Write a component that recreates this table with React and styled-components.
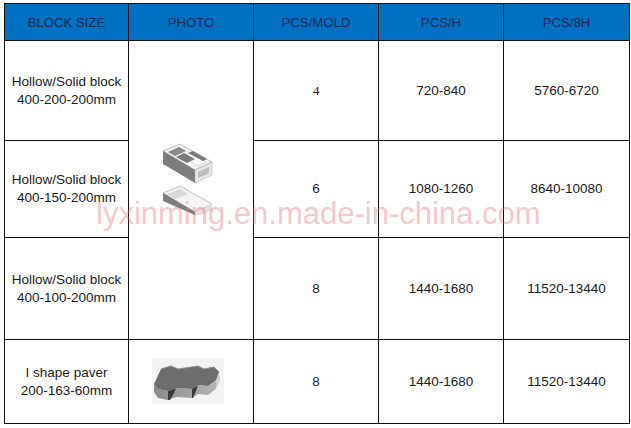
import React from 'react';
import styled, { createGlobalStyle } from 'styled-components';

const GlobalStyle = createGlobalStyle`
  html, body {
    margin: 0;
    padding: 0;
    background: #ffffff;
  }
`;

const Page = styled.div`
  position: relative;
  width: 631px;
  height: 428px;
  padding: 3px 0 0 4px;
  box-sizing: border-box;
  font-family: "Liberation Sans", Arial, sans-serif;
`;

const Table = styled.table`
  border-collapse: collapse;
  table-layout: fixed;
  width: 625px;
`;

const HeadCell = styled.th`
  background: #0070c0;
  color: #1b2d5c;
  font-weight: normal;
  font-size: 13.2px;
  border: 1px solid #111;
  height: 36px;
  padding: 0;
  text-align: center;
  vertical-align: middle;
`;

const Cell = styled.td`
  border: 1px solid #111;
  height: ${(p) => p.$h}px;
  padding: 0;
  text-align: center;
  vertical-align: middle;
  font-size: 13.5px;
  line-height: 18px;
  color: #1a1a1a;
  font-family: ${(p) => (p.$serif ? '"Liberation Serif", "DejaVu Serif", serif' : 'inherit')};
`;

const PhotoCell = styled.td`
  border: 1px solid #111;
  padding: 0;
  vertical-align: middle;
  text-align: center;
`;

const PhotoWrap = styled.div`
  display: flex;
  justify-content: center;
  align-items: center;
  padding-right: ${(p) => p.$pr || 0}px;
  padding-bottom: ${(p) => p.$pb || 0}px;
`;

const Watermark = styled.div`
  position: absolute;
  left: 96px;
  top: 196px;
  font-family: "Liberation Sans", Arial, sans-serif;
  font-size: 31px;
  color: rgba(232, 110, 120, 0.4);
  pointer-events: none;
  white-space: nowrap;
`;

const HollowBlocks = () => (
  <svg width="52" height="72" viewBox="0 0 52 72">
    {/* upper hollow block */}
    <polygon points="1,8 18,1 50,19 33,27" fill="#f2f2f2" stroke="#9a9a9a" strokeWidth="0.6" />
    <polygon points="6,9 17,4 24,8 13,13" fill="#8a8a8a" />
    <polygon points="20,13 27,10 44,19 36,23" fill="#f8f8f8" stroke="#bdbdbd" strokeWidth="0.5" />
    <polygon points="26,10 31,8 45,16 41,18" fill="#7c7c7c" />
    <polygon points="14,14 22,10 33,16 25,20" fill="#7c7c7c" />
    <polygon points="1,8 33,27 33,40 1,21" fill="#7d7d7d" />
    <polygon points="33,27 50,19 50,32 33,40" fill="#e6e6e6" stroke="#a8a8a8" strokeWidth="0.5" />
    <polygon points="36,29 47,24 47,30 36,35" fill="#bdbdbd" />
    {/* lower solid block */}
    <polygon points="1,50 18,43 50,61 33,69" fill="#f4f4f4" stroke="#9a9a9a" strokeWidth="0.6" />
    <polygon points="5,51 18,46 26,51 13,56" fill="#d8d8d8" />
    <polygon points="1,50 33,69 33,72 1,58" fill="#7d7d7d" />
    <polygon points="33,69 50,61 50,68 38,72 33,72" fill="#e0e0e0" />
  </svg>
);

const Paver = () => (
  <svg width="72" height="46" viewBox="0 0 72 46">
    <defs>
      <linearGradient id="paverSide" x1="0" y1="0" x2="1" y2="0">
        <stop offset="0" stopColor="#8a8a8a" />
        <stop offset="1" stopColor="#b4b4b4" />
      </linearGradient>
    </defs>
    <rect x="0" y="0" width="72" height="46" fill="#f3f3f3" />
    {/* front side band */}
    <polygon
      points="2,26 6,31 16,33 24,30 40,31 46,27 56,28 64,22 64,31 56,37 46,36 40,40 24,39 16,42 6,40 2,34"
      fill="url(#paverSide)"
    />
    {/* notch shadows */}
    <polygon points="16,33 24,30 22,35 18,42 16,42" fill="#3c3c3c" />
    <polygon points="40,31 46,27 44,33 41,40 40,40" fill="#3c3c3c" />
    {/* right end face */}
    <polygon points="64,22 67,14 68,22 64,31" fill="#cfcfcf" />
    {/* top face */}
    <polygon
      points="2,26 9,11 19,8 26,11 46,8 52,11 62,9 67,14 64,22 56,28 46,27 40,31 24,30 16,33 6,31"
      fill="#6d6d6d"
    />
    <polyline points="9,11 19,8 26,11 46,8 52,11 62,9 67,14" fill="none" stroke="#909090" strokeWidth="1" />
  </svg>
);

const rows = [
  { name: ['Hollow/Solid block', '400-200-200mm'], mold: '4', serif: true, h: '720-840', h8: '5760-6720', height: 99 },
  { name: ['Hollow/Solid block', '400-150-200mm'], mold: '6', h: '1080-1260', h8: '8640-10080', height: 96 },
  { name: ['Hollow/Solid block', '400-100-200mm'], mold: '8', h: '1440-1680', h8: '11520-13440', height: 101 },
];

export default function App() {
  return (
    <>
      <GlobalStyle />
      <Page>
        <Table>
          <colgroup>
            <col style={{ width: 124 }} />
            <col style={{ width: 125 }} />
            <col style={{ width: 125 }} />
            <col style={{ width: 125 }} />
            <col style={{ width: 126 }} />
          </colgroup>
          <thead>
            <tr>
              <HeadCell>BLOCK SIZE</HeadCell>
              <HeadCell>PHOTO</HeadCell>
              <HeadCell>PCS/MOLD</HeadCell>
              <HeadCell>PCS/H</HeadCell>
              <HeadCell>PCS/8H</HeadCell>
            </tr>
          </thead>
          <tbody>
            {rows.map((r, i) => (
              <tr key={r.name[1]}>
                <Cell $h={r.height}>
                  {r.name[0]}
                  <br />
                  {r.name[1]}
                </Cell>
                {i === 0 && (
                  <PhotoCell rowSpan={3}>
                    <PhotoWrap $pr={7} $pb={22}>
                      <HollowBlocks />
                    </PhotoWrap>
                  </PhotoCell>
                )}
                <Cell $h={r.height} $serif={r.serif}>{r.mold}</Cell>
                <Cell $h={r.height}>{r.h}</Cell>
                <Cell $h={r.height}>{r.h8}</Cell>
              </tr>
            ))}
            <tr>
              <Cell $h={83}>
                I shape paver
                <br />
                200-163-60mm
              </Cell>
              <PhotoCell>
                <PhotoWrap $pr={6} $pb={2}>
                  <Paver />
                </PhotoWrap>
              </PhotoCell>
              <Cell $h={83}>8</Cell>
              <Cell $h={83}>1440-1680</Cell>
              <Cell $h={83}>11520-13440</Cell>
            </tr>
          </tbody>
        </Table>
        <Watermark>lyxinming.en.made-in-china.com</Watermark>
      </Page>
    </>
  );
}
